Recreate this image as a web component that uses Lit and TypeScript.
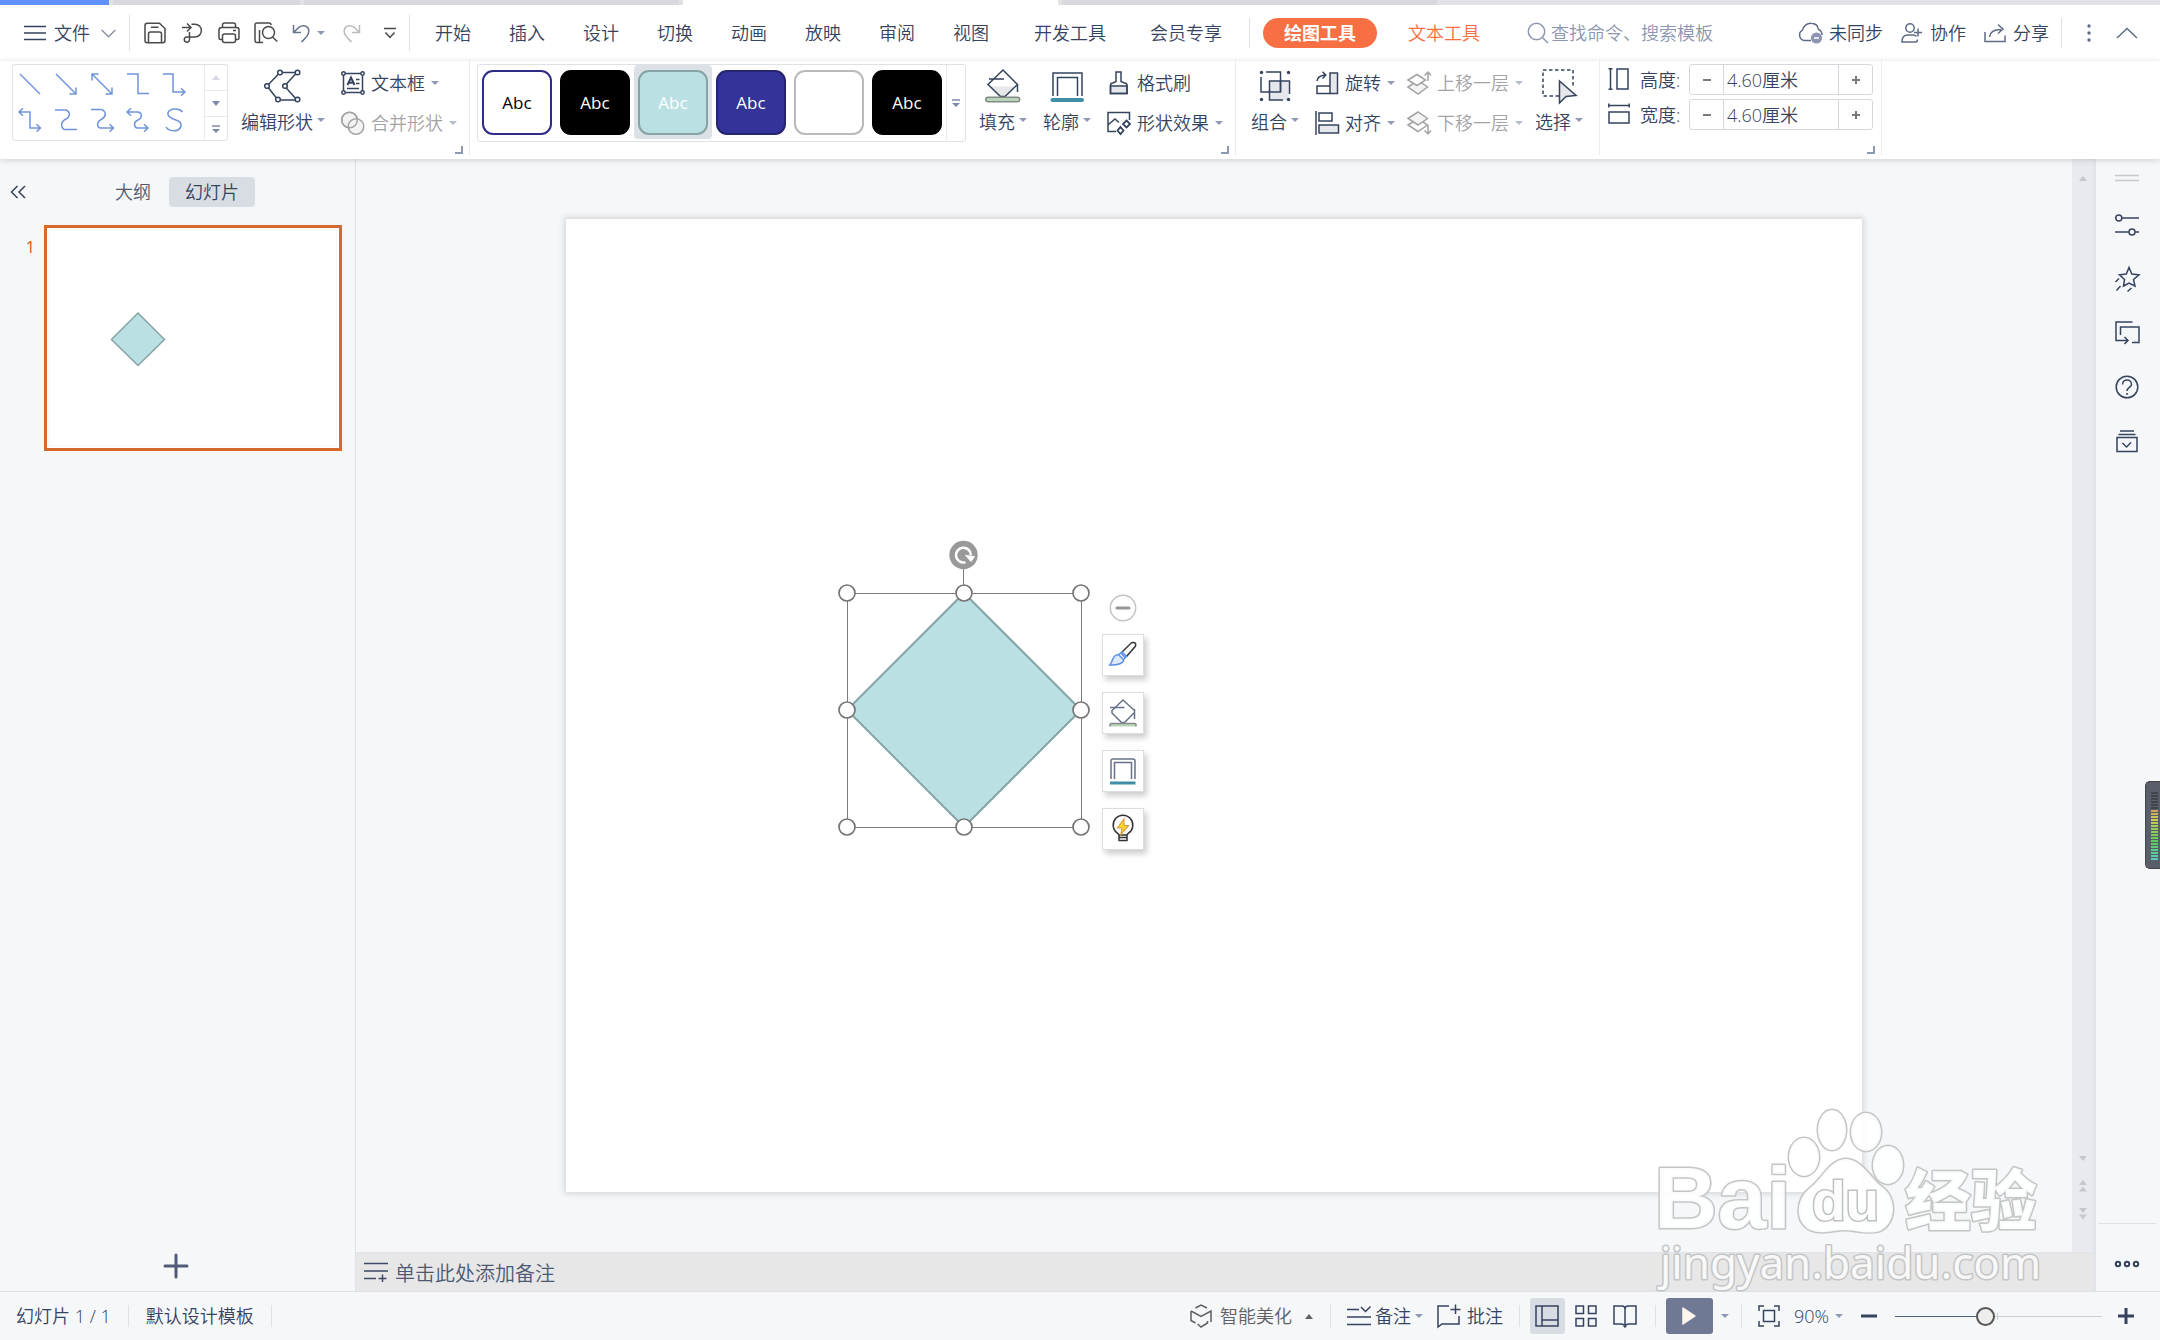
import { LitElement, html, css, svg, nothing, TemplateResult } from "lit";
import { customElement, property } from "lit/decorators.js";
import { classMap } from "lit/directives/class-map.js";

type Glyph = { w: number; h: number; body: TemplateResult };

/* Every glyph is drawn in its own pixel grid; strokes use currentColor. */
const GLYPHS: Record<string, Glyph> = {
  menu: { w: 22, h: 16, body: svg`<path d="M0 1.5H22M0 8H22M0 14.5H22"/>` },
  chevDown: { w: 15, h: 9, body: svg`<path d="M.7 1l6.8 6.8L14.300 1" stroke="#8c93a5"/>` },
  chevUp: { w: 22, h: 12, body: svg`<path d="M1 11L11 1.500 21 11"/>` },
  save: { w: 22, h: 22, body: svg`<path d="M1 3.500Q1 1.300 3.200 1.300H15.500L21 6.500V18.500Q21 20.700 18.800 20.700H3.200Q1 20.700 1 18.500ZM4.500 20.500V12Q4.500 10 6.500 10H15.500Q17.500 10 17.500 12V20.500M7 5.300H14.500"/>` },
  pdf: { w: 22, h: 22, body: svg`<path d="M1 5.500H9.500M6 1.500L10 5.500 6 9.500M10.500 2.200H14A6.300 6.300 0 0 1 14 15H5.800A2.600 2.600 0 1 0 8.500 17.800V10"/>` },
  print: { w: 22, h: 22, body: svg`<path d="M4.500 5.500V3Q4.500 1 6.500 1H15.500Q17.500 1 17.500 3V5.500M4 17.500H2.500Q1 17.500 1 15.500V8Q1 5.500 3.500 5.500H18.500Q21 5.500 21 8V15.500Q21 17.500 19.500 17.500H18M4.500 14Q4.500 12 6.500 12H15.500Q17.500 12 17.500 14V18.500Q17.500 20.500 15.500 20.500H6.500Q4.500 20.500 4.500 18.500ZM15 8.500H18"/>` },
  preview: { w: 24, h: 22, body: svg`<path d="M9 20.500H3Q1 20.500 1 18.500V3Q1 1 3 1H15Q17 1 17 3M5.500 20V8"/><circle cx="14.500" cy="10.500" r="6"/><path d="M18.500 15L23.300 19.500"/>` },
  undo: { w: 18, h: 20, body: svg`<path d="M1.500 2V9.500H9M1.800 9.200L7 4.200C13 .5 17 4.500 16.800 8.500 16.500 13 13.500 15 9.500 19" stroke="#68758f"/>` },
  redo: { w: 18, h: 20, body: svg`<path d="M16.500 2V9.500H9M16.200 9.200L11 4.200C5 .5 1 4.500 1.200 8.500 1.500 13 4.500 15 8.500 19" stroke="#bbb"/>` },
  more: { w: 12, h: 12, body: svg`<path d="M0 1.500H12M1.500 5.500L6 10.500 10.500 5.500"/>` },
  search: { w: 22, h: 22, body: svg`<circle cx="9.500" cy="9.500" r="8.200"/><path d="M15.500 15.500L21 21"/>` },
  cloud: { w: 24, h: 22, body: svg`<path d="M13 18.500H6.500A5.500 5.500 0 0 1 4.500 8.200C5.500 3.500 9.500 1 13 1.200 17.500 1.300 20 4 20.500 7.500 22.800 8.500 24 10.500 24 13"/><circle cx="18.500" cy="16" r="5.600" fill="#8c96b4" stroke="none"/><path d="M16 16H21" stroke="#fff"/>` },
  people: { w: 22, h: 20, body: svg`<circle cx="9" cy="5" r="4.200"/><path d="M15.500 13.500Q14 12 12 12H6Q1 12.500 1 19H14.500Q16.500 19 16.500 16.500M13 9.500H21M17 5.500V13.500"/>` },
  share: { w: 22, h: 20, body: svg`<path d="M1 9V18.500H21V12.500M5.500 14C6 9 10 6.500 17 6.500M14 1.500L19 6 14 10.500"/>` },
  dots3: { w: 6, h: 18, body: svg`<g fill="currentColor" stroke="none"><circle cx="3" cy="2" r="1.700"/><circle cx="3" cy="9" r="1.700"/><circle cx="3" cy="16" r="1.700"/></g>` },

  ln1: { w: 24, h: 24, body: svg`<path d="M2 2L22 22"/>` },
  ln2: { w: 24, h: 24, body: svg`<path d="M2 2L22 22M22 15.500V22H15.500"/>` },
  ln3: { w: 24, h: 24, body: svg`<path d="M2 2L22 22M22 15.500V22H15.500M2 8.500V2H8.500"/>` },
  ln4: { w: 24, h: 24, body: svg`<path d="M1 2H12V21.500H23"/>` },
  ln5: { w: 24, h: 24, body: svg`<path d="M1 2H11V20H23M19 16.200L23 20 19 23.800"/>` },
  ln6: { w: 24, h: 24, body: svg`<path d="M1 4H12V20H22.500M5 .2L1 4 5 7.800M18.500 16.200L22.500 20 18.500 23.800"/>` },
  ln7: { w: 24, h: 24, body: svg`<path d="M1 2H12C17 4 16 9 12 11 6 14 7 19 10 21.500H23"/>` },
  ln8: { w: 24, h: 24, body: svg`<path d="M1 1.500H11C17 3 16 9 12 11 6 14 7 19 10 20H23.500M19.500 16.200L23.500 20 19.500 23.800"/>` },
  ln9: { w: 24, h: 24, body: svg`<path d="M1 4H12C17 5 16 10 12 12 7 14 8 19 11 20H22M5 .2L1 4 5 7.800M18 16.200L22 20 18 23.800"/>` },
  ln10: { w: 24, h: 24, body: svg`<path d="M20.500 4C17-.5 8 .5 6 4.500 5 9 10 10.500 14 12 21 14 20 19.500 16 22 11 24 5.500 22 4 19"/>` },

  editShape: { w: 38, h: 34, body: svg`<path d="M16 3.500H33L20.500 17 33 31H14L3 17Z"/><g fill="#fff"><circle cx="16" cy="3.500" r="2.300"/><circle cx="33.500" cy="3.500" r="2.300"/><circle cx="21" cy="17" r="2.300"/><circle cx="33.500" cy="30.500" r="2.300"/><circle cx="14" cy="30.500" r="2.300"/><circle cx="3" cy="17" r="2.300"/></g>` },
  textBox: { w: 24, h: 24, body: svg`<rect x="2.500" y="2.500" width="19" height="19"/><g fill="#fff"><circle cx="2.500" cy="2.500" r="1.700"/><circle cx="21.500" cy="2.500" r="1.700"/><circle cx="2.500" cy="21.500" r="1.700"/><circle cx="21.500" cy="21.500" r="1.700"/></g><path d="M6.500 14L10 6.500 13.500 14M7.700 11.800H12.300" stroke-width="2"/><path d="M15 8.500H18.500M15 12.500H18.500M6 17.500H18"/>` },
  merge: { w: 24, h: 24, body: svg`<g fill="#f3f3f3"><circle cx="8.500" cy="9" r="7.800"/><circle cx="15" cy="15.500" r="7.800"/></g><circle cx="8.500" cy="9" r="7.800"/>` },
  fill: { w: 36, h: 34, body: svg`<path d="M6 17.500H30L19 28H15Z" fill="#e6e7eb" stroke="none"/><path d="M18 1L3 15.500 15.500 27.500H20L32.500 15.500ZM4 10H19M32.500 15V23"/><rect x=".7" y="28.200" width="34" height="4.600" rx="2.300" fill="#b9d4b9" stroke="#858b88"/>` },
  outline: { w: 34, h: 34, body: svg`<path d="M3 27V4H32V27M7.500 27V8.500H27.500V27"/><path d="M2.500 31H32" stroke="#3f8fa8" stroke-width="4" stroke-linecap="round"/>` },
  painter: { w: 24, h: 24, body: svg`<path d="M3.500 15H20V22.500H3.500Z" fill="#e6e7eb"/><path d="M3.500 22.500V14.500Q3.500 12 6 12L9 10.500V1H14V10.500L17.500 12Q20 12 20 14.500V22.500Z"/>` },
  effect: { w: 24, h: 24, body: svg`<path d="M9 20.500H1V1.500H22.500V9M1.500 13.500L8 8 12 11.500"/><path d="M19.500 9.500l3.500 3.500-3.500 3.500-3.500-3.500zM13.500 16l3 3.500-3 3.500-3-3.500z" stroke-width="1.800"/>` },
  group: { w: 32, h: 32, body: svg`<rect x="10.500" y="11" width="19" height="19" fill="#e6e7eb" stroke="none"/><rect x="10.500" y="11" width="11" height="11"/><path d="M7 2H21.500V22M2 7V22H10.500M21.500 11H30.500V24M10.500 20V30H24"/><g fill="currentColor" stroke="none"><circle cx="2.500" cy="2.500" r="1.700"/><circle cx="29.500" cy="2.500" r="1.700"/><circle cx="2.500" cy="29.500" r="1.700"/><circle cx="29.500" cy="29.500" r="1.700"/></g>` },
  rotate: { w: 24, h: 24, body: svg`<rect x="15" y="2" width="7.500" height="20.500" fill="#e6e7eb"/><path d="M15 15H2V22.500H15M2 10C2.500 6 5 4.500 10 4M7.500 .8L10.800 4 7.500 7.500"/>` },
  align: { w: 24, h: 24, body: svg`<path d="M1 0V24"/><rect x="4" y="2" width="13" height="8"/><rect x="4" y="14" width="19.500" height="8" fill="#e6e7eb"/>` },
  layerUp: { w: 24, h: 24, body: svg`<path d="M1 16L11 9.500 20.500 16 11 23Z" fill="#f3f3f3"/><path d="M1 9L10 3.500 18.500 9 10 14.500Z" fill="#fff"/><path d="M21 10V1M17.500 4.500L21 1 24 4.500"/>` },
  layerDown: { w: 24, h: 24, body: svg`<path d="M1 14L11 8 20.500 14 11 20.500Z" fill="#fff"/><path d="M1 7.500L11 1 20.500 7.500 11 14Z" fill="#f3f3f3"/><path d="M21 14V23M17.500 19.500L21 23 24 19.500"/>` },
  select: { w: 36, h: 36, body: svg`<path d="M18 28H2V2H32V20" stroke-dasharray="3.500 2.500"/><path d="M18.500 13L35 27.500 25 28.500 18.500 35Z" fill="#e6e7eb"/>` },
  height: { w: 22, h: 22, body: svg`<path d="M2.500 .8V21.200M.5 .8H4.500M.5 21.200H4.500"/><rect x="9" y="1" width="11" height="20"/>` },
  width: { w: 22, h: 22, body: svg`<path d="M.8 2.500H21.200M.8 .5V4.500M21.200 .5V4.500"/><rect x="1" y="9" width="20" height="11"/>` },
  minusS: { w: 10, h: 10, body: svg`<path d="M1 5H9" stroke-width="2"/>` },
  plusS: { w: 10, h: 10, body: svg`<path d="M1 5H9M5 1V9" stroke-width="2"/>` },

  collapse: { w: 16, h: 14, body: svg`<path d="M7.500 1L1.500 7 7.500 13M15 1L9 7 15 13"/>` },
  plusL: { w: 24, h: 24, body: svg`<path d="M1 12H23M12 1V23" stroke="#515a78" stroke-width="3" stroke-linecap="round"/>` },
  notes: { w: 24, h: 20, body: svg`<path d="M0 1.500H24M0 9H24M0 16.500H12M14.500 16.500H22.500M18.500 12.500V20"/>` },
  cube: { w: 22, h: 24, body: svg`<path d="M5.500 4L11 1 17 4M1 7V16.500L5.500 19M1 7L11 12.500 21 7V18M7.500 20L11 23 17.500 19V17"/>` },
  remark: { w: 24, h: 20, body: svg`<path d="M0 3.500H12M0 11H24M0 18.500H24M14 1L18.500 5.500 23.500 .5"/>` },
  comment: { w: 24, h: 24, body: svg`<path d="M12 2H1V23L5 20H22V12M18.500 .5V10M13.500 5.500H23.500"/>` },
  viewNormal: { w: 24, h: 22, body: svg`<path d="M1 1H23V21H1ZM7 1V21M7 15H23"/>` },
  viewGrid: { w: 22, h: 22, body: svg`<path d="M1 1H8.500V8.500H1ZM13.500 1H21V8.500H13.500ZM1 13.500H8.500V21H1ZM13.500 13.500H21V21H13.500Z"/>` },
  book: { w: 24, h: 22, body: svg`<path d="M12 20L8.500 19H1V1H9Q12 1 12 4V20L15.500 19H23V1H15Q12 1 12 4M10.500 20.500L12 22 13.500 20.500"/>` },
  play: { w: 14, h: 18, body: svg`<path d="M1 1L13 9 1 17Z" fill="#fff6ee" stroke="#fff6ee" stroke-linejoin="round"/>` },
  fit: { w: 22, h: 22, body: svg`<path d="M1 6V1H6M16 1H21V6M21 16V21H16M6 21H1V16"/><rect x="5.500" y="5.500" width="11" height="11"/>` },
  minusB: { w: 16, h: 16, body: svg`<path d="M0 8H16" stroke-width="3"/>` },
  plusB: { w: 16, h: 16, body: svg`<path d="M0 8H16M8 0V16" stroke-width="3"/>` },

  grip: { w: 24, h: 8, body: svg`<path d="M0 1.500H24M0 6.500H24" stroke="#c6c9ce"/>` },
  sliders: { w: 24, h: 22, body: svg`<path d="M7 4H24M0 18H13.500M20.500 18H24"/><circle cx="3.800" cy="4" r="3"/><circle cx="17" cy="18" r="3"/>` },
  star: { w: 26, h: 26, body: svg`<path d="M15 1.500L17.800 8 25 8.800 19.500 13.500 21 20 15 17 9.500 20 10.500 13.500 5.500 8.800 12.300 8ZM5 12.500L1.500 16M6.500 20L2.500 24.500M17.500 22L13.500 25.500"/>` },
  swap: { w: 26, h: 26, body: svg`<path d="M18.500 2H2V20.500H14M10.500 17L14 20.500 10.500 24M6.500 15V7H25V22.500H18"/>` },
  help: { w: 24, h: 24, body: svg`<circle cx="12" cy="12" r="10.800"/><path d="M7.500 9.500C7.500 3.500 16.500 3.500 16.500 9.500 16.500 12.500 12 12.500 12 16M12 18V20"/>` },
  box: { w: 22, h: 24, body: svg`<path d="M4 2H18M2.500 5.500H19.500M1 8.500H21V22.500H1ZM6.500 14L10.500 18 15 13.500"/>` },
  rings: { w: 26, h: 8, body: svg`<g stroke-width="2"><circle cx="4" cy="4" r="2.200"/><circle cx="13" cy="4" r="2.200"/><circle cx="22" cy="4" r="2.200"/></g>` },
  upTri: { w: 8, h: 5, body: svg`<path d="M4 0L8 5H0Z" fill="currentColor" stroke="none"/>` },
  downTri: { w: 8, h: 5, body: svg`<path d="M0 0H8L4 5Z" fill="currentColor" stroke="none"/>` },
  barTri: { w: 8, h: 8, body: svg`<path d="M0 1H8" stroke-width="1.500"/><path d="M0 4H8L4 8Z" fill="currentColor" stroke="none"/>` },
  upTri2: { w: 8, h: 12, body: svg`<path d="M4 0L8 5H0ZM4 6.500L8 11.500H0Z" fill="currentColor" stroke="none"/>` },
  downTri2: { w: 8, h: 12, body: svg`<path d="M0 0H8L4 5ZM0 6.500H8L4 11.500Z" fill="currentColor" stroke="none"/>` },
  corner: { w: 8, h: 8, body: svg`<path d="M7 0V7H0" stroke="#8c99b5" stroke-width="2"/>` },

  fMinus: { w: 28, h: 28, body: svg`<circle cx="14" cy="14" r="12.700" fill="#fff" stroke="#c4c4c4"/><path d="M8 14H20" stroke="#969696" stroke-width="3" stroke-linecap="round"/>` },
  fBrush: { w: 28, h: 28, body: svg`<path d="M13 11L22.500 1.800Q25 .8 26.500 2.500 27.200 4 26 5.800L17.500 15.500" stroke="#333"/><path d="M9.500 13.500L14.500 18.500C15 22 9 24.500 .8 24 4.500 20 3 14 9.500 13.500Z" fill="#dde8fb" stroke="#5a8ee8"/><path d="M10 13.500L13 10.800 17.500 15.500 14.500 18.500M12 12L16 16.500" stroke="#5a8ee8"/>` },
  fFill: { w: 28, h: 28, body: svg`<path d="M14 1L3 11.500V14L12.500 23.500H15.500L25.500 13.500V11.500ZM1 8.500H15.500M25.500 10V20" stroke="#68718a"/><path d="M1 27.500V26Q1 24.500 2.500 24.500H26Q27 24.500 27 26V27.500" fill="#b9d4b9" stroke="#858b88"/>` },
  fOutline: { w: 28, h: 28, body: svg`<path d="M2 22V4Q2 2 4 2H24Q26 2 26 4V22M5.500 22V5.500H22.500V22" stroke="#68718a"/><path d="M1 26H26.500" stroke="#3f8fa8" stroke-width="3"/>` },
  fBulb: { w: 28, h: 28, body: svg`<path d="M10 20Q9.500 19 8.500 18.200A9.800 9.800 0 1 1 19.500 18.200Q18.500 19 18 20ZM10 20V25.500H18V20M10 22.500H18" stroke="#333"/><path d="M15 4L8.500 13H13L12 19.500 19.500 10.500H15Z" fill="#ffdc2a" stroke="#e09a3a" stroke-width="1.200"/>` },
};

const glyph = (name: string) => {
  const g = GLYPHS[name];
  return html`<svg class="glyph" width=${g.w} height=${g.h} viewBox="0 0 ${g.w} ${g.h}" aria-hidden="true">${g.body}</svg>`;
};

const base = css`
  * { box-sizing: border-box; }
  .glyph { display: block; flex: none; fill: none; stroke: currentColor; stroke-width: 1.5; overflow: visible; }
  button, input { font: inherit; color: inherit; margin: 0; padding: 0; border: 0; background: none; outline: none; border-radius: 0; }
  button { display: flex; align-items: center; justify-content: center; white-space: nowrap; cursor: pointer; }
  .caret { width: 8px; height: 4px; flex: none; background: #8d99b5; clip-path: polygon(0 0, 100% 0, 50% 100%); }
  .rule { width: 1px; flex: none; background: #dfe1e6; }
`;

@customElement("wps-menubar")
export class WpsMenubar extends LitElement {
  static styles = [base, css`
    :host { display: flex; align-items: center; height: 56px; background: #fff; padding-right: 22px; }
    .file { gap: 8px; padding: 0 13px 0 24px; }
    .file .glyph:last-child { margin-left: 3px; }
    .rule { height: 36px; }
    .rule.short { height: 30px; }
    .quick { display: flex; padding-left: 6px; color: #4a4a4e; }
    .quick button { width: 37px; height: 30px; }
    .quick .undo { width: 49px; gap: 7px; }
    .quick .tail { width: 38px; }
    .tabs { display: flex; padding: 0 5px 0 6px; }
    .tabs button { padding: 0 19px; }
    .tabs .wide { padding: 0 22px; }
    .tabs .first { margin-left: 4px; }
    .pill { height: 30px; padding: 0 21px; margin-left: 13px; border-radius: 15px; background: #f76f43; color: #fff; font-weight: 700; }
    .texttool { margin-left: 31px; color: #f76f43; }
    .search { display: flex; align-items: center; gap: 2px; margin-left: 47px; color: #8c96b0; }
    .search input { width: 180px; }
    .search input::placeholder { color: #8c96b0; opacity: 1; }
    .right { display: flex; align-items: center; margin-left: auto; gap: 18px; }
    .right button { gap: 7px; }
    .right .glyph { color: #5f6b86; }
    .end { display: flex; align-items: center; gap: 24px; margin-left: -6px; }
  `];
  render() {
    const tabs = ["开始", "插入", "设计", "切换", "动画", "放映", "审阅", "视图", "开发工具", "会员专享"];
    return html`
      <button class="file">${glyph("menu")}<span>文件</span>${glyph("chevDown")}</button>
      <div class="rule"></div>
      <div class="quick">
        <button aria-label="保存">${glyph("save")}</button>
        <button aria-label="输出为PDF">${glyph("pdf")}</button>
        <button aria-label="打印">${glyph("print")}</button>
        <button aria-label="打印预览">${glyph("preview")}</button>
        <button class="undo" aria-label="撤销">${glyph("undo")}<i class="caret"></i></button>
        <button class="tail" aria-label="恢复">${glyph("redo")}</button>
        <button class="tail" aria-label="更多">${glyph("more")}</button>
      </div>
      <div class="rule"></div>
      <nav class="tabs">
        ${tabs.map((t, i) => html`<button class=${classMap({ wide: i > 7, first: i === 8 })}>${t}</button>`)}
      </nav>
      <div class="rule short"></div>
      <button class="pill">绘图工具</button>
      <button class="texttool">文本工具</button>
      <label class="search">${glyph("search")}<input type="text" aria-label="查找命令" placeholder="查找命令、搜索模板" /></label>
      <div class="right">
        <button>${glyph("cloud")}<span>未同步</span></button>
        <button>${glyph("people")}<span>协作</span></button>
        <button>${glyph("share")}<span>分享</span></button>
        <div class="end">
          <div class="rule short"></div>
          <button aria-label="更多选项">${glyph("dots3")}</button>
          <button aria-label="折叠功能区">${glyph("chevUp")}</button>
        </div>
      </div>`;
  }
}

@customElement("wps-ribbon")
export class WpsRibbon extends LitElement {
  static styles = [base, css`
    :host { display: flex; align-items: flex-start; height: 98px; background: #fff; }
    .group { position: relative; display: flex; align-items: flex-start; height: 94px; border-right: 1px solid #e9ebee; }
    .corner { position: absolute; right: 6px; bottom: 1px; }
    button, label { color: #36435f; }
    .g1 { padding: 0 12px; }
    .g2 { padding: 0 12px 0 7px; }
    .g3 { padding: 0 16px 0 15px; }
    .g4 { padding: 3px 8px 0; flex-direction: column; gap: 4px; }
    .box { display: flex; margin: 3px 13px 0 0; border: 1px solid #dfe1e6; border-radius: 3px; }
    .lines { display: grid; grid-template-columns: repeat(5, 36px); grid-auto-rows: 36px; width: 191px; padding: 1px 0 2px; }
    .lines button { padding-right: 2px; color: #6f95dc; }
    .scroll { display: grid; grid-template-rows: 25px 26px 24px; width: 23px; border-left: 1px solid #e9ebee; }
    .scroll button { color: #7c89a8; }
    .scroll button + button { border-top: 1px solid #e9ebee; }
    .scroll .off { color: #d3d9e6; }
    .big { flex-direction: column; gap: 0; margin-right: 16px; padding-top: 6px; }
    .pic { display: flex; align-items: center; justify-content: center; height: 38px; }
    .cap { display: flex; align-items: center; gap: 4px; line-height: 34px; }
    .cap .caret { margin-bottom: 4px; }
    .last { margin-right: 0; }
    .rows { display: flex; flex-direction: column; padding-top: 2px; }
    .rows + .rows, .rows + .big { margin-left: 12px; }
    .rows button { height: 40px; gap: 6px; justify-content: flex-start; }
    .rows .dim { color: #a3a3a6; }
    .dim .caret { background: #b4bcd0; }
    .cell { width: 78px; height: 74px; padding: 5px 4px 4px; border-radius: 4px; }
    .cell.on { background: #dce1e6; }
    .swatch { display: flex; align-items: center; justify-content: center; width: 70px; height: 65px; border-radius: 11px; border: 2px solid; font-family: "Open Sans", sans-serif; font-size: 17px; font-weight: 400; }
    .s0 { background: #fff; border-color: #2d2d87; color: #000; }
    .s1, .s5 { background: #000; border-color: #000; color: #fff; }
    .s2 { background: #bae0e3; border-color: #86a4a6; color: #fff; }
    .s3 { background: #333399; border-color: #25256e; color: #fff; }
    .s4 { background: #fff; border-color: #bababa; color: #fff; }
    .drop { width: 19px; height: 76px; border-left: 1px solid #e9ebee; color: #7c89a8; }
    .size { display: flex; align-items: center; height: 31px; }
    .size label { display: flex; align-items: center; gap: 10px; width: 81px; }
    .size .glyph { margin-bottom: 2px; }
    .spin { display: flex; width: 184px; height: 31px; border: 1px solid #d5d8de; border-radius: 3px; }
    .spin button { width: 34px; color: #77797e; }
    .spin button .glyph { margin: 0; }
    .spin button:first-child { border-right: 1px solid #d5d8de; }
    .spin button:last-child { border-left: 1px solid #d5d8de; }
    .spin input { width: 114px; padding-left: 3px; color: #36435f; }
  `];
  private big(icon: string, text: string, last = false) {
    return html`<button class=${classMap({ big: true, last })}>
      <span class="pic">${glyph(icon)}</span><span class="cap">${text}<i class="caret"></i></span></button>`;
  }
  private row(icon: string, text: string, dim = false, caret = true) {
    return html`<button class=${classMap({ dim })} ?disabled=${dim}>${glyph(icon)}<span>${text}</span>${caret ? html`<i class="caret"></i>` : nothing}</button>`;
  }
  private size(id: string, icon: string, text: string) {
    return html`<div class="size"><label for=${id}>${glyph(icon)}<span>${text}</span></label>
      <div class="spin"><button aria-label="减小">${glyph("minusS")}</button><input id=${id} type="text" .value=${"4.60厘米"} /><button aria-label="增大">${glyph("plusS")}</button></div></div>`;
  }
  render() {
    const corner = html`<button class="corner" aria-label="更多设置">${glyph("corner")}</button>`;
    return html`
      <section class="group g1">
        <div class="box">
          <div class="lines">${[1, 2, 3, 4, 5, 6, 7, 8, 9, 10].map((n) => html`<button aria-label="线条${n}">${glyph("ln" + n)}</button>`)}</div>
          <div class="scroll">
            <button class="off" aria-label="上翻">${glyph("upTri")}</button>
            <button aria-label="下翻">${glyph("downTri")}</button>
            <button aria-label="展开">${glyph("barTri")}</button>
          </div>
        </div>
        ${this.big("editShape", "编辑形状")}
        <div class="rows">${this.row("textBox", "文本框")}${this.row("merge", "合并形状", true)}</div>
        ${corner}
      </section>
      <section class="group g2">
        <div class="box">
          ${["Abc", "Abc", "Abc", "Abc", "", "Abc"].map((t, i) => html`<button class=${classMap({ cell: true, on: i === 2 })} aria-label="样式${i + 1}"><span class="swatch s${i}">${t}</span></button>`)}
          <button class="drop" aria-label="更多样式">${glyph("barTri")}</button>
        </div>
        ${this.big("fill", "填充")}${this.big("outline", "轮廓")}
        <div class="rows">${this.row("painter", "格式刷", false, false)}${this.row("effect", "形状效果")}</div>
        ${corner}
      </section>
      <section class="group g3">
        ${this.big("group", "组合")}
        <div class="rows">${this.row("rotate", "旋转")}${this.row("align", "对齐")}</div>
        <div class="rows">${this.row("layerUp", "上移一层", true)}${this.row("layerDown", "下移一层", true)}</div>
        ${this.big("select", "选择", true)}
      </section>
      <section class="group g4">
        ${this.size("shape-h", "height", "高度:")}${this.size("shape-w", "width", "宽度:")}
        ${corner}
      </section>`;
  }
}

@customElement("wps-outline")
export class WpsOutline extends LitElement {
  static styles = [base, css`
    :host { display: flex; flex-direction: column; width: 356px; flex: none; border-right: 1px solid #dfe1e6; padding: 18px 0 13px; }
    .head { display: flex; align-items: center; height: 30px; padding-left: 10px; }
    .tab { margin-left: 89px; color: #4c5974; }
    .tab.on { margin-left: 18px; padding: 0 16px; height: 30px; border-radius: 4px; background: #d8dde4; color: #36435f; }
    .slide { display: flex; margin: 18px 13px 0 0; }
    .num { width: 44px; padding: 10px 9px 0 0; text-align: right; color: #d8601c; font-size: 16px; font-weight: 400; font-family: "Noto Sans", sans-serif; }
    .thumb { flex: 1; padding: 2px; border: 3px solid #d66a2c; background: #fff; }
    .page { display: block; width: 100%; border: 1px solid #f6f7f9; }
    .add { margin: auto auto 0; padding-right: 3px; }
  `];
  render() {
    return html`
      <div class="head">
        <button aria-label="收起">${glyph("collapse")}</button>
        <button class="tab">大纲</button>
        <button class="tab on">幻灯片</button>
      </div>
      <div class="slide">
        <span class="num">1</span>
        <div class="thumb"><svg class="page" viewBox="0 0 286 214"><path d="M88 82L114.500 108.500 88 134.500 61.500 108.500Z" fill="#bae0e3" stroke="#86a4a6" stroke-width="1.500"/></svg></div>
      </div>
      <button class="add" aria-label="新建幻灯片">${glyph("plusL")}</button>`;
  }
}

@customElement("wps-canvas")
export class WpsCanvas extends LitElement {
  static styles = [base, css`
    :host { display: flex; flex-direction: column; flex: 1; min-width: 0; border-right: 3px solid #e2e4ea; }
    .stage { display: flex; flex: 1; min-height: 0; }
    .desk { display: flex; flex: 1; padding: 60px 210px; }
    .page { position: relative; flex: 1; background: #fff; box-shadow: 0 0 6px 2px rgba(0, 0, 0, 0.13); }
    .shape { position: absolute; left: 271px; top: 312px; display: block; }
    .tools { position: absolute; left: 536px; top: 375px; display: flex; flex-direction: column; align-items: center; gap: 16px; }
    .tools button { width: 42px; height: 42px; background: #fff; border: 1px solid #dcdde0; box-shadow: 3px 4px 6px rgba(0, 0, 0, 0.2); }
    .tools .close { height: 28px; margin-bottom: -4px; border: 0; box-shadow: none; background: none; }
    .bar { display: flex; flex-direction: column; align-items: center; width: 21px; background: #e9eaef; color: #c5c7cc; padding: 14px 0 33px; gap: 18px; }
    .bar .down { margin-top: auto; }
    .bar button { height: 10px; }
    .notes { display: flex; align-items: center; gap: 7px; height: 39px; padding: 4px 8px 0; border-top: 1px solid #e0e1e9; background: #e7e7e7; font-size: 20px; color: #4c5974; }
    .notes .glyph { color: #3d4a66; margin-bottom: 4px; }
    .notes input { flex: 1; line-height: 28px; }
    .notes input::placeholder { color: #4c5974; opacity: 1; }
  `];
  render() {
    const pts = [10, 127, 244].flatMap((x) => [62, 179, 296].map((y) => [x, y])).filter(([x, y]) => !(x === 127 && y === 179));
    return html`
      <div class="stage">
        <div class="desk">
          <div class="page">
            <svg class="shape" width="256" height="308" viewBox="0 0 256 308" role="img" aria-label="菱形">
              <path d="M127 62L244 179 127 296 10 179Z" fill="#bae0e3" stroke="#86a4a6" stroke-width="2"/>
              <rect x="10.500" y="62.500" width="234" height="234" fill="none" stroke="#7c7c7c"/>
              <path d="M126.500 36V60" stroke="#7c7c7c"/>
              ${pts.map(([x, y]) => svg`<circle cx=${x} cy=${y} r="8" fill="#fff" stroke="#757575" stroke-width="1.700"/>`)}
              <circle cx="126.500" cy="24" r="14.200" fill="#999"/>
              <path d="M128.500 31.200A7.400 7.400 0 1 1 133.800 24" fill="none" stroke="#fff" stroke-width="2.600"/>
              <path d="M128.500 24.500L137.500 25.500 134 30.500Z" fill="#fff" stroke="#fff"/>
            </svg>
            <div class="tools">
              <button class="close" aria-label="收起工具">${glyph("fMinus")}</button>
              <button aria-label="形状样式">${glyph("fBrush")}</button>
              <button aria-label="形状填充">${glyph("fFill")}</button>
              <button aria-label="形状轮廓">${glyph("fOutline")}</button>
              <button aria-label="智能推荐">${glyph("fBulb")}</button>
            </div>
          </div>
        </div>
        <div class="bar">
          <button aria-label="向上">${glyph("upTri")}</button>
          <button class="down" aria-label="向下">${glyph("downTri")}</button>
          <button aria-label="上一页">${glyph("upTri2")}</button>
          <button aria-label="下一页">${glyph("downTri2")}</button>
        </div>
      </div>
      <label class="notes">${glyph("notes")}<input type="text" aria-label="备注" placeholder="单击此处添加备注" /></label>`;
  }
}

@customElement("wps-sidebar")
export class WpsSidebar extends LitElement {
  static styles = [base, css`
    :host { display: flex; flex-direction: column; align-items: center; width: 64px; flex: none; padding: 15px 2px 0 0; }
    button { width: 40px; height: 30px; margin-bottom: 24px; }
    .grip { height: 8px; margin-bottom: 28px; }
    .foot { width: 58px; margin: auto 0 0; height: 68px; padding-top: 13px; border-top: 1px solid #dfe1e6; }
  `];
  render() {
    return html`
      <div class="grip">${glyph("grip")}</div>
      <button aria-label="属性">${glyph("sliders")}</button>
      <button aria-label="动画">${glyph("star")}</button>
      <button aria-label="切换">${glyph("swap")}</button>
      <button aria-label="帮助">${glyph("help")}</button>
      <button aria-label="备份">${glyph("box")}</button>
      <button class="foot" aria-label="更多">${glyph("rings")}</button>`;
  }
}

@customElement("wps-status")
export class WpsStatus extends LitElement {
  @property({ type: Number }) zoom = 43;
  static styles = [base, css`
    :host { display: flex; align-items: center; height: 49px; border-top: 1px solid #dfe1e6; padding: 0 26px 0 16px; }
    .rule { height: 22px; }
    .left, .right { display: flex; align-items: center; gap: 16px; }
    .left { gap: 17px; }
    .right { margin-left: auto; }
    .right button { gap: 6px; }
    .right .smart { gap: 8px; color: #5f6064; }
    .smart .glyph:last-child { margin-left: 4px; width: 10px; }
    .right .notes-btn { gap: 4px; }
    .notes-btn .caret { margin-right: -2px; }
    .views { display: flex; align-items: center; margin: 0 -4px 0 -6px; gap: 4px; }
    .views button { width: 35px; height: 36px; border-radius: 3px; }
    .views .on { background: #d8dde4; }
    .show { display: flex; align-items: center; gap: 8px; margin: 0 -4px 0 -6px; }
    .play { width: 47px; height: 36px; border-radius: 3px; background: #707993; }
    .drop { width: 8px; height: 20px; }
    .zoombar { display: flex; align-items: center; gap: 18px; }
    .pct { margin-left: -4px; }
    .slider { -webkit-appearance: none; appearance: none; width: 207px; height: 20px; margin-right: -2px; background: linear-gradient(#c9ced8, #c9ced8) 102px center / 1px 7px no-repeat, linear-gradient(90deg, #4f6389 45%, #c9ced8 45%) center / 100% 1px no-repeat; }
    .slider::-webkit-slider-thumb { -webkit-appearance: none; width: 19px; height: 19px; border-radius: 50%; border: 2px solid #555; background: #ededed; }
  `];
  render() {
    return html`
      <div class="left">
        <span>幻灯片 1 / 1</span><div class="rule"></div>
        <span>默认设计模板</span><div class="rule"></div>
      </div>
      <div class="right">
        <button class="smart">${glyph("cube")}<span>智能美化</span>${glyph("upTri")}</button>
        <div class="rule"></div>
        <button class="notes-btn">${glyph("remark")}<span>备注</span><i class="caret"></i></button>
        <button>${glyph("comment")}<span>批注</span></button>
        <div class="rule"></div>
        <div class="views">
          <button class="on" aria-label="普通视图">${glyph("viewNormal")}</button>
          <button aria-label="幻灯片浏览">${glyph("viewGrid")}</button>
          <button aria-label="阅读视图">${glyph("book")}</button>
        </div>
        <div class="rule"></div>
        <div class="show"><button class="play" aria-label="放映">${glyph("play")}</button><button class="drop" aria-label="放映选项"><i class="caret"></i></button></div>
        <div class="rule"></div>
        <div class="zoombar">
          <button aria-label="适应窗口">${glyph("fit")}</button>
          <button class="pct"><span>90%</span><i class="caret"></i></button>
          <button aria-label="缩小">${glyph("minusB")}</button>
          <input class="slider" type="range" min="0" max="100" .value=${String(this.zoom)} aria-label="缩放" />
          <button aria-label="放大">${glyph("plusB")}</button>
        </div>
      </div>`;
  }
}

@customElement("app-root")
export class AppRoot extends LitElement {
  static styles = [base, css`
    :host { position: relative; display: flex; flex-direction: column; height: 100vh; overflow: hidden; background: #f5f7f9; color: #36435f; font-family: "Open Sans", "Noto Sans CJK SC", sans-serif; font-size: 18px; font-weight: 350; line-height: 24px; }
    .strip { display: flex; height: 5px; flex: none; background: #e1e2e6; }
    .strip i { background: #d8d9dd; }
    .t1 { flex: 109; } .t2 { flex: 187; margin-left: 4px; } .t3 { flex: 375; margin: 0 4px; } .t4 { flex: 375; } .t5 { flex: 375; margin-left: 4px; } .t6 { flex: 723; }
    .strip .t1 { background: #6190f8; }
    .strip .t4 { background: #fff; }
    .strip .t6 { background: #e1e2e6; }
    wps-menubar, wps-ribbon { flex: none; }
    wps-ribbon { position: relative; box-shadow: 0 1px 6px rgba(40, 50, 70, 0.2); }
    .work { display: flex; flex: 1; min-height: 0; }
    wps-status { flex: none; }
    .mark { position: absolute; right: 110px; bottom: 42px; pointer-events: none; display: block; }
    .ink { fill: #fff; fill-opacity: 0.9; stroke: #c4c5c6; stroke-width: 3; paint-order: stroke; stroke-linejoin: round; }
    .logo { font: 700 88px "Liberation Sans", Arial, sans-serif; }
    .cut { font: 700 55px "Liberation Sans", Arial, sans-serif; fill: #fdfdfd; stroke: #bfc0c2; stroke-width: 3; paint-order: stroke; }
    .zh { font: 900 66px "Noto Sans CJK SC", sans-serif; }
    .url { font: 400 44px "Noto Sans", sans-serif; }
    .meter { position: absolute; right: 0; top: 781px; width: 15px; height: 88px; padding: 10px 2px 9px 5px; border: 1px solid #43454d; border-right: 0; border-radius: 5px 0 0 5px; background: #5a5e6b; }
    .meter svg { display: block; }
  `];
  render() {
    const hue = (i: number) => (i < 6 ? "#40424c" : `hsl(${38 + (i - 6) * 8.200}, 52%, 58%)`);
    return html`
      <div class="strip"><i class="t1"></i><i class="t2"></i><i class="t3"></i><i class="t4"></i><i class="t5"></i><i class="t6"></i></div>
      <wps-menubar></wps-menubar>
      <wps-ribbon></wps-ribbon>
      <div class="work">
        <wps-outline></wps-outline>
        <wps-canvas></wps-canvas>
        <wps-sidebar></wps-sidebar>
      </div>
      <wps-status></wps-status>
      <svg class="mark" width="400" height="194" viewBox="0 0 400 194">
        <g class="ink">
          <text class="logo" x="4" y="124">Bai</text>
          <ellipse cx="154" cy="53" rx="15" ry="19"/><ellipse cx="182" cy="26" rx="14" ry="20"/>
          <ellipse cx="216" cy="28" rx="15" ry="19"/><ellipse cx="238" cy="61" rx="15" ry="19"/>
          <path d="M196 55C212 56 218 71 232 83 247 93 247 119 230 127 217 131 206 126 195 126 184 126 173 131 160 126 144 117 146 95 160 84 174 73 179 56 196 55Z"/>
          <text class="zh" x="255" y="121">经验</text>
          <text class="url" x="10" y="175">jingyan.baidu.com</text>
        </g>
        <text class="cut" x="162" y="116">du</text>
      </svg>
      <div class="meter"><svg width="7" height="68" viewBox="0 0 7 68">${Array.from({ length: 23 }, (_, i) => svg`<rect x="0" y=${i * 3} width="7" height="2" fill=${hue(i)}/>`)}</svg></div>`;
  }
}
